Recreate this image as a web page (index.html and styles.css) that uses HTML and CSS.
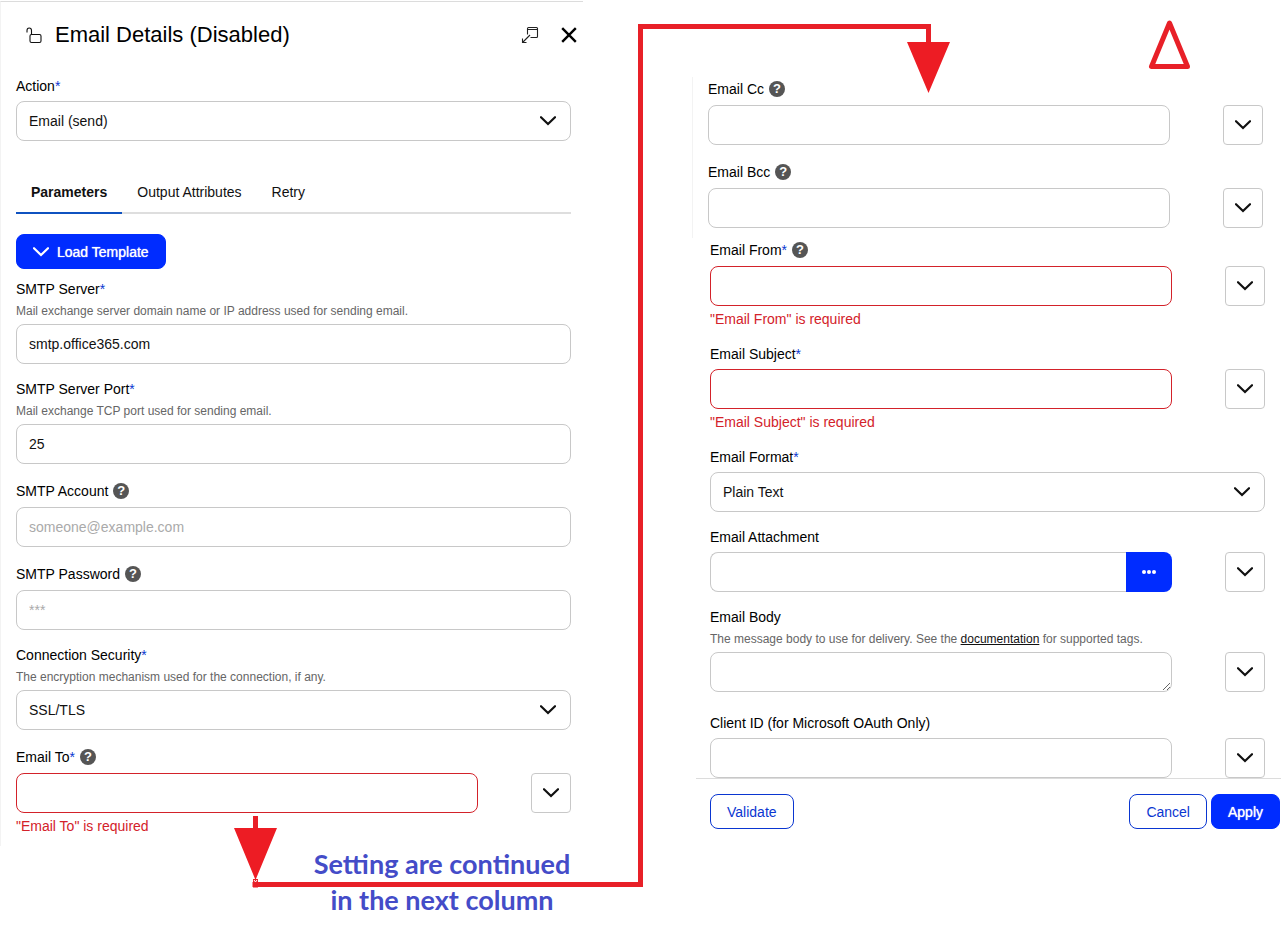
FILE: index.html
```html
<!DOCTYPE html>
<html lang="en">
<head>
    <meta charset="UTF-8">
    <title>Email Details</title>
    <link rel="stylesheet" href="styles.css">
</head>
<body>
    <!-- shared icons -->
    <svg class="defs">
        <symbol id="chevron" viewBox="0 0 16 10">
            <path d="M1 1.2 L8 8 L15 1.2" fill="none" stroke="currentColor" stroke-width="2.2" stroke-linecap="round"/>
        </symbol>
    </svg>

    <main class="page">
        <div class="column">
            <section class="panel">
                <header class="panel-header">
                    <svg class="lock" viewBox="0 0 16 17" width="16" height="17">
                        <path d="M1 5.500 V3.500 Q1 1 3.200 1 Q5.500 1 5.500 3.500 V7.500 M5.500 7.500 H13.500 Q15 7.500 15 9 V14 Q15 15.500 13.500 15.500 H5.500 Q4 15.500 4 14 V9 Q4 7.500 5.500 7.500" fill="none" stroke="#111" stroke-width="1.1"/>
                    </svg>
                    <h1>Email Details (Disabled)</h1>
                    <button class="icon-button" type="button" aria-label="Pop out">
                        <svg viewBox="0 0 18 18" width="18" height="18">
                            <path d="M6.5 8.5 V2.5 Q6.5 1.500 7.500 1.500 H15.500 Q16.500 1.500 16.500 2.500 V10.500 Q16.500 11.500 15.500 11.500 H9.500 M6.500 3.500 H16.500 M9 9 L1.500 16.500 M1.500 12.500 V16.500 H5.500" fill="none" stroke="#222" stroke-width="1.1"/>
                        </svg>
                    </button>
                    <button class="icon-button" type="button" aria-label="Close">
                        <svg viewBox="0 0 16 16" width="16" height="16">
                            <path d="M1.200 1.200 L14.800 14.800 M14.800 1.200 L1.200 14.800" fill="none" stroke="#000" stroke-width="2.400"/>
                        </svg>
                    </button>
                </header>

                <form class="form">
                    <div class="field">
                        <label for="action">Action<i>*</i></label>
                        <div class="select">
                            <select id="action"><option>Email (send)</option></select>
                            <svg class="chevron"><use href="#chevron"/></svg>
                        </div>
                    </div>

                    <div class="tabs" role="tablist">
                        <button type="button" role="tab" class="tab active" aria-selected="true">Parameters</button>
                        <button type="button" role="tab" class="tab">Output Attributes</button>
                        <button type="button" role="tab" class="tab">Retry</button>
                    </div>

                    <button class="btn primary load" type="button">
                        <svg class="chevron"><use href="#chevron"/></svg>
                        Load Template
                    </button>

                    <div class="fields">
                        <div class="field">
                            <label for="server">SMTP Server<i>*</i></label>
                            <p class="hint">Mail exchange server domain name or IP address used for sending email.</p>
                            <input id="server" type="text" value="smtp.office365.com">
                        </div>
                        <div class="field">
                            <label for="port">SMTP Server Port<i>*</i></label>
                            <p class="hint">Mail exchange TCP port used for sending email.</p>
                            <input id="port" type="text" value="25">
                        </div>
                        <div class="field">
                            <label class="with-help" for="account">SMTP Account <span class="help">?</span></label>
                            <input id="account" type="text" placeholder="someone@example.com">
                        </div>
                        <div class="field">
                            <label class="with-help" for="password">SMTP Password <span class="help">?</span></label>
                            <input id="password" type="password" placeholder="***">
                        </div>
                        <div class="field">
                            <label for="security">Connection Security<i>*</i></label>
                            <p class="hint">The encryption mechanism used for the connection, if any.</p>
                            <div class="select">
                                <select id="security"><option>SSL/TLS</option></select>
                                <svg class="chevron"><use href="#chevron"/></svg>
                            </div>
                        </div>
                        <div class="field invalid">
                            <label class="with-help" for="to"><span>Email To<i>*</i></span> <span class="help">?</span></label>
                            <div class="row">
                                <input id="to" type="text">
                                <button class="more" type="button" aria-label="Email To options"><svg class="chevron"><use href="#chevron"/></svg></button>
                            </div>
                            <p class="error">"Email To" is required</p>
                        </div>
                    </div>
                </form>
            </section>
            <p class="note">Setting are continued<br>in the next column</p>
        </div>

        <form class="column continued">
            <div class="fields copies">
                <div class="field">
                    <label class="with-help" for="cc">Email Cc <span class="help">?</span></label>
                    <div class="row">
                        <input id="cc" type="text">
                        <button class="more" type="button" aria-label="Email Cc options"><svg class="chevron"><use href="#chevron"/></svg></button>
                    </div>
                </div>
                <div class="field">
                    <label class="with-help" for="bcc">Email Bcc <span class="help">?</span></label>
                    <div class="row">
                        <input id="bcc" type="text">
                        <button class="more" type="button" aria-label="Email Bcc options"><svg class="chevron"><use href="#chevron"/></svg></button>
                    </div>
                </div>
            </div>

            <div class="fields message">
                <div class="field invalid">
                    <label class="with-help" for="from"><span>Email From<i>*</i></span> <span class="help">?</span></label>
                    <div class="row">
                        <input id="from" type="text">
                        <button class="more" type="button" aria-label="Email From options"><svg class="chevron"><use href="#chevron"/></svg></button>
                    </div>
                    <p class="error">"Email From" is required</p>
                </div>
                <div class="field invalid">
                    <label for="subject">Email Subject<i>*</i></label>
                    <div class="row">
                        <input id="subject" type="text">
                        <button class="more" type="button" aria-label="Email Subject options"><svg class="chevron"><use href="#chevron"/></svg></button>
                    </div>
                    <p class="error">"Email Subject" is required</p>
                </div>
                <div class="field">
                    <label for="format">Email Format<i>*</i></label>
                    <div class="select">
                        <select id="format"><option>Plain Text</option></select>
                        <svg class="chevron"><use href="#chevron"/></svg>
                    </div>
                </div>
                <div class="field">
                    <label for="attachment">Email Attachment</label>
                    <div class="row">
                        <div class="picker">
                            <input id="attachment" type="text">
                            <button class="browse" type="button" aria-label="Browse">
                                <svg viewBox="0 0 14 4" width="14" height="4" fill="#fff">
                                    <circle cx="2" cy="2" r="2"/><circle cx="7" cy="2" r="2"/><circle cx="12" cy="2" r="2"/>
                                </svg>
                            </button>
                        </div>
                        <button class="more" type="button" aria-label="Email Attachment options"><svg class="chevron"><use href="#chevron"/></svg></button>
                    </div>
                </div>
                <div class="field body-field">
                    <label for="body">Email Body</label>
                    <p class="hint">The message body to use for delivery. See the <a href="#">documentation</a> for supported tags.</p>
                    <div class="row">
                        <textarea id="body" rows="1"></textarea>
                        <button class="more" type="button" aria-label="Email Body options"><svg class="chevron"><use href="#chevron"/></svg></button>
                    </div>
                </div>
                <div class="field">
                    <label for="client">Client ID (for Microsoft OAuth Only)</label>
                    <div class="row">
                        <input id="client" type="text">
                        <button class="more" type="button" aria-label="Client ID options"><svg class="chevron"><use href="#chevron"/></svg></button>
                    </div>
                </div>
            </div>

            <footer class="actions">
                <button class="btn validate" type="button">Validate</button>
                <button class="btn" type="button">Cancel</button>
                <button class="btn primary" type="submit">Apply</button>
            </footer>
        </form>

        <!-- arrows drawn over both columns -->
        <svg class="arrows" viewBox="0 0 1284 934">
            <path d="M255.500 816 V830 M255.500 879 V884.500 H640.500 V26.500 H928.500 V44" fill="none" stroke="#e82028" stroke-width="5"/>
            <path d="M253 882 V887 H258" fill="none" stroke="#e82028"/>
            <path d="M234 828 H277 L255.500 880 Z M907 42 H950 L928.500 93 Z" fill="#ed1c24"/>
            <path d="M254 880 L255.500 882 L257 880" fill="none" stroke="#fff"/>
            <path d="M1169.500 23 L1151.500 66.500 H1187.500 Z" fill="none" stroke="#e82028" stroke-width="5" stroke-linejoin="round"/>
        </svg>
    </main>
</body>
</html>
```
FILE: styles.css
```css
:root {
    --blue: #002cff;
    --link: #0a36d1;
    --border: #c8c8c8;
    --red: #d3222a;
}
* {
    margin: 0;
    padding: 0;
    box-sizing: border-box;
}
body {
    background: #fff;
    color: #111;
    font: 14px/20px "Liberation Sans", Arial, sans-serif;
}
button, input, select, textarea {
    font: inherit;
    color: inherit;
}
button {
    background: none;
    border: 0;
    cursor: pointer;
}
.defs {
    display: none;
}
.page {
    position: relative;
    display: grid;
    grid-template-columns: 583fr 589fr;
    column-gap: 109px;
    padding: 1px 3px 0 0;
}

/* left panel */
.panel {
    border-top: 1px solid #dcdcdc;
    border-left: 1px solid #f3f3f3;
    padding-bottom: 10px;
}
.panel-header {
    display: flex;
    align-items: center;
    height: 66px;
    padding: 0 6px 0 25px;
}
h1 {
    flex: 1;
    margin-left: 13px;
    color: #000;
    font-size: 22px;
    line-height: 28px;
    font-weight: normal;
}
.icon-button {
    display: flex;
    margin-left: 22px;
}
.form {
    padding: 8px 12px 0 15px;
}

/* fields */
.fields {
    display: flex;
    flex-direction: column;
    gap: 15px;
}
label {
    display: block;
    margin-bottom: 5px;
    color: #000;
}
label i {
    color: var(--link);
    font-style: normal;
}
.with-help {
    display: flex;
    align-items: center;
    gap: 5px;
    height: 23px;
}
.help {
    width: 16px;
    height: 16px;
    border-radius: 50%;
    background: #555;
    color: #fff;
    font-size: 13px;
    line-height: 16px;
    font-weight: bold;
    text-align: center;
}
.hint {
    margin: -1px 0 5px;
    color: #666;
    font-size: 12px;
    line-height: 16px;
}
.hint a {
    color: #111;
}
input, select, textarea {
    display: block;
    width: 100%;
    height: 40px;
    padding: 0 12px;
    background: #fff;
    border: 1px solid var(--border);
    border-radius: 8px;
    appearance: none;
}
textarea {
    padding: 9px 12px;
    resize: vertical;
}
::placeholder {
    color: #aaa;
}
.invalid input {
    border-color: var(--red);
}
.error {
    margin-top: 3px;
    color: var(--red);
}
.chevron {
    width: 16px;
    height: 10px;
}
.select {
    position: relative;
}
.select .chevron {
    position: absolute;
    top: 15px;
    right: 15px;
    pointer-events: none;
}
.row {
    display: flex;
    gap: 53px;
}
.more {
    display: flex;
    align-items: center;
    justify-content: center;
    flex: 0 0 40px;
    height: 40px;
    border: 1px solid var(--border);
    border-radius: 4px;
}
.picker {
    display: flex;
    flex: 1;
}
.picker input {
    border-right: 0;
    border-radius: 8px 0 0 8px;
}
.browse {
    display: flex;
    align-items: center;
    justify-content: center;
    flex: 0 0 46px;
    background: var(--blue);
    border-radius: 0 8px 8px 0;
}

/* tabs */
.tabs {
    display: flex;
    margin: 41px 0 20px;
    box-shadow: inset 0 -2px #dedede;
}
.tab {
    padding: 0 15px 10px;
    border-bottom: 2px solid transparent;
}
.tab.active {
    border-color: #0f52c0;
    font-weight: bold;
}

/* buttons */
.btn {
    height: 35px;
    padding: 0 16px;
    border: 1px solid var(--link);
    border-radius: 8px;
    color: var(--link);
}
.btn.primary {
    background: var(--blue);
    border-color: var(--blue);
    color: #fff;
    text-shadow: 0 0 1px #fff;
}
.load {
    display: flex;
    align-items: center;
    gap: 8px;
    margin-bottom: 10px;
}

.note {
    margin-left: 301px;
    color: #444cc8;
    font: bold 27px/36px Lato, sans-serif;
    text-align: center;
}

/* right column */
.continued {
    padding-top: 76px;
}
.copies {
    padding: 0 18px 10px 15px;
    border-left: 1px solid #f3f3f3;
}
.message {
    padding: 0 16px 0 18px;
}
.body-field {
    padding-bottom: 6px;
}
.actions {
    display: flex;
    gap: 4px;
    margin-left: 4px;
    padding: 15px 1px 0 14px;
    border-top: 1px solid #dcdcdc;
}
.validate {
    margin-right: auto;
}

.arrows {
    position: absolute;
    top: 0;
    left: 0;
    width: 100%;
    pointer-events: none;
}
```
